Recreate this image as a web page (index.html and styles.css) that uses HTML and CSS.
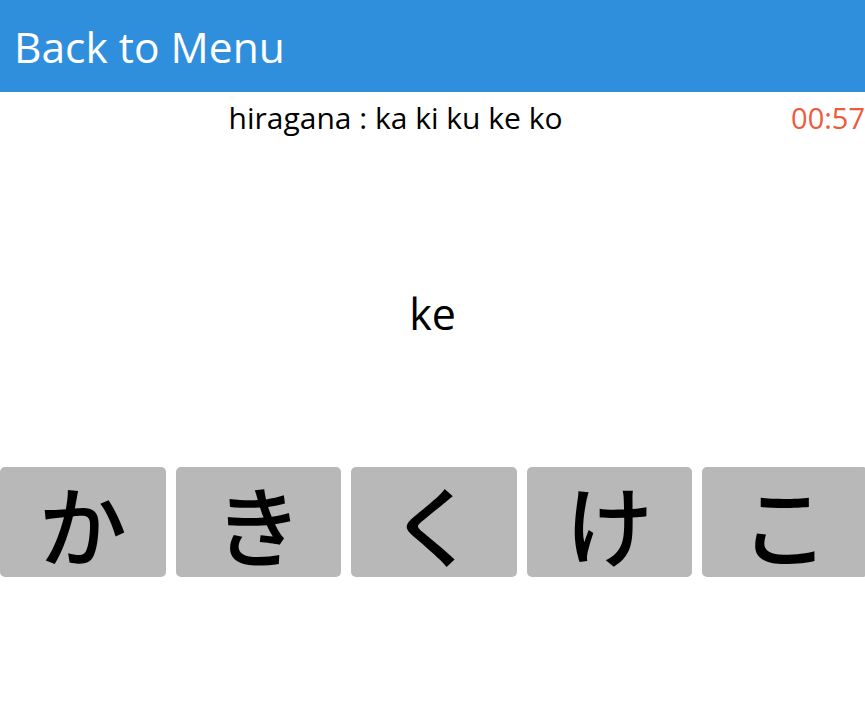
FILE: index.html
```html
<!DOCTYPE html>
<html>

<head>
    <title>Kana Quiz</title>
    <link rel="stylesheet" href="styles.css">
</head>

<body>
    <div class="header">
        <a class="back" href="#">Back to Menu</a>
    </div>

    <div class="status">
        <span class="lesson">hiragana : ka ki ku ke ko</span>
        <span class="timer">00:57</span>
    </div>

    <div class="prompt">ke</div>

    <div class="choices">
        <button class="choice">か</button>
        <button class="choice">き</button>
        <button class="choice">く</button>
        <button class="choice">け</button>
        <button class="choice">こ</button>
    </div>
</body>

</html>
```

FILE: styles.css
```css
body {
    font-family: "Open Sans", "Noto Sans CJK JP", sans-serif;
    margin: 0;
    background: #ffffff;
    overflow: hidden;
}

.header {
    background-color: #2f8fdd;
    height: 92px;
    display: flex;
    align-items: center;
    padding-left: 14px;
}

.back {
    color: #ffffff;
    text-decoration: none;
    font-size: 42.5px;
}

.status {
    display: flex;
    align-items: center;
    height: 50px;
    font-size: 30px;
}

.lesson {
    flex: 1;
    text-align: center;
    color: #000000;
}

.timer {
    color: #ee5a3a;
    font-size: 29px;
}

.prompt {
    text-align: center;
    font-size: 43px;
    height: 325px;
    padding-top: 18px;
    box-sizing: border-box;
    display: flex;
    align-items: center;
    justify-content: center;
}

.choices {
    display: flex;
    gap: 10px;
}

.choice {
    flex: none;
    width: 165.5px;
    height: 110px;
    border: none;
    border-radius: 5px;
    background-color: #b8b8b8;
    color: #000000;
    font-family: "Noto Sans CJK JP", sans-serif;
    font-size: 88px;
    font-weight: 500;
    padding: 0;
    line-height: 1;
}
```
